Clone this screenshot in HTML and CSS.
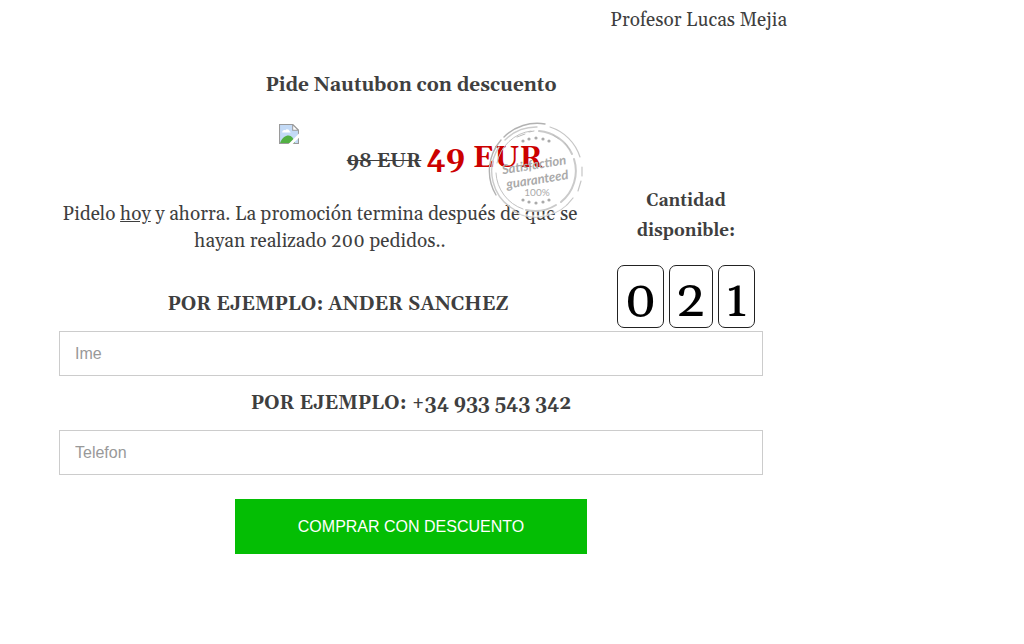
FILE: index.html
```html
<!DOCTYPE html>
<html lang="es">
<head>
  <meta charset="UTF-8">
  <meta name="viewport" content="width=device-width, initial-scale=1.0">
  <title>Pide Nautubon con descuento</title>
  <link rel="stylesheet" href="styles.css">
</head>
<body>
  <div class="container">
    <p class="author">Profesor Lucas Mejia</p>

    <form class="order">
      <h2>Pide Nautubon con descuento</h2>

      <div class="price-row">
        <svg class="product" viewBox="0 0 19 19" aria-hidden="true">
          <path d="M.5.5h12.500l5.500 5.500v12.500H.5z" fill="#c3daf6" stroke="#9a9a9a"/>
          <path d="M3 8c0-2 2-3 3-2 1-2 4-1 4 1 1 0 1 1 1 1z" fill="#fff"/>
          <path d="M1 18c2-5 5-7 8-7 3 0 5 3 6 7z" fill="#52b043"/>
          <path d="M9 19L19 9v4l-6 6z" fill="#fff"/>
          <path d="M13 .5v5.500h5.500z" fill="#fff" stroke="#9a9a9a"/>
        </svg>
        <div class="price">
          <del>98 EUR</del>
          <strong>49 EUR</strong>
        </div>
        <svg class="stamp" viewBox="0 0 98 98">
          <g fill="none" stroke-linecap="round">
            <path d="M58 2A47 47 0 0 0 17 15M14 18A47 47 0 0 0 9 73" stroke="#b2b2b2" stroke-width="1.400"/>
            <path d="M63 5A46 46 0 0 1 93 35M95 45v9M94 59l-3 10M86 76A46 46 0 0 1 26 89" stroke="#c6c6c6" stroke-width="1.200"/>
            <path d="M50 5A44 44 0 0 0 18 18M12 25A44 44 0 0 0 28 88" stroke="#ccc" stroke-width="1.400"/>
            <path d="M44 9A40 40 0 0 0 10 41M9 51A40 40 0 0 0 36 87" stroke="#c2c2c2"/>
            <path d="M52 9A40 40 0 0 1 85 32M87 37A40 40 0 0 1 74 80M69 83A40 40 0 0 1 39 88" stroke="#cacaca" stroke-width="2"/>
            <path d="M30 15l8-3M42 10l5-1M66 13l6 4M78 21l5 7" stroke="#bbb"/>
            <path d="M32 91A45 45 0 0 0 78 83" stroke="#fff" stroke-width="2" opacity=".6"/>
          </g>
          <g fill="#aaa">
            <circle cx="36" cy="19" r="1.600"/><circle cx="42" cy="17" r="1.600"/><circle cx="49" cy="16" r="1.600"/><circle cx="56" cy="17" r="1.600"/><circle cx="62" cy="19" r="1.600"/>
            <circle cx="36" cy="78" r="1.600"/><circle cx="42" cy="80" r="1.600"/><circle cx="49" cy="81" r="1.600"/><circle cx="56" cy="80" r="1.600"/><circle cx="62" cy="78" r="1.600"/>
          </g>
          <g class="stamp-text" text-anchor="middle">
            <text x="48" y="47" transform="rotate(-9 49 49)">Satisfaction</text>
            <text x="49" y="62" transform="rotate(-9 49 49)">guaranteed</text>
            <text class="percent" x="50" y="74">100%</text>
          </g>
        </svg>
      </div>

      <div class="offer">
        <div class="offer-text">
          <p>Pidelo <u>hoy</u> y ahorra. La promoción termina después de que se hayan realizado 200 pedidos..</p>
          <label for="name">POR EJEMPLO: ANDER SANCHEZ</label>
        </div>
        <div class="stock">
          <h3>Cantidad disponible:</h3>
          <div class="digits">
            <span>0</span>
            <span>2</span>
            <span>1</span>
          </div>
        </div>
      </div>
      <input type="text" name="name" id="name" placeholder="Ime">

      <label class="phone-label" for="phone">POR EJEMPLO: +34 933 543 342</label>
      <input type="tel" name="phone" id="phone" placeholder="Telefon">

      <button type="submit">COMPRAR CON DESCUENTO</button>
    </form>
  </div>
</body>
</html>
```
FILE: styles.css
```css
* {
  box-sizing: border-box;
}

body {
  margin: 0;
  background: #fff;
  color: #3f3f3f;
  font-family: Georgia, Gelasio, "Liberation Serif", serif;
  font-size: 19px;
  line-height: 27px;
}

.container {
  max-width: 787px;
  padding: 7px 0 40px 35px;
}

.author {
  margin: 0;
  text-align: right;
}

.order {
  padding: 0 24px;
}

h2 {
  margin: 38px 0 25px;
  font-size: 19px;
  line-height: 27px;
  text-align: center;
}

.price-row {
  position: relative;
  display: flex;
  justify-content: center;
  gap: 48px;
  height: 62px;
}

.product {
  width: 20px;
  height: 20px;
}

.price {
  padding-top: 14px;
  line-height: 40px;
  font-weight: bold;
}

.price strong {
  color: #c00;
  font-size: 30px;
}

/* lies over the price and the first line of the offer */
.stamp {
  position: absolute;
  top: -2px;
  left: 50%;
  width: 98px;
  height: 98px;
  margin-left: 76px;
}

.stamp-text {
  fill: #aaa;
  font-family: Lato, sans-serif;
  font-size: 13px;
  font-style: italic;
  font-weight: bold;
}

.stamp-text .percent {
  font-size: 10px;
  font-style: normal;
  font-weight: normal;
}

.offer {
  display: grid;
  grid-template-columns: 1fr 146px;
}

.offer-text p {
  margin: 15px 36px 36px 0;
  text-align: center;
}

label {
  display: block;
  margin-bottom: 13px;
  font-weight: bold;
  text-align: center;
}

.stock {
  padding-right: 8px;
}

.stock h3 {
  margin: 0 0 19px;
  font-size: 17px;
  line-height: 30px;
  text-align: center;
}

.digits {
  display: flex;
  gap: 5px;
}

.digits span {
  flex: auto;
  height: 63px;
  border: 1px solid #222;
  border-radius: 7px;
  color: #000;
  font-size: 53px;
  line-height: 70px;
  text-align: center;
}

input {
  display: block;
  width: 100%;
  height: 45px;
  padding: 0 15px;
  border: 1px solid #ccc;
  color: #3f3f3f;
  font-family: Arial, "Liberation Sans", sans-serif;
  font-size: 16px;
}

input::placeholder {
  color: #999;
}

.phone-label {
  margin-top: 14px;
}

button {
  display: block;
  width: 50%;
  height: 55px;
  margin: 24px auto 0;
  border: none;
  background: #04be04;
  color: #fff;
  font-family: Arial, "Liberation Sans", sans-serif;
  font-size: 16px;
  cursor: pointer;
}
```
